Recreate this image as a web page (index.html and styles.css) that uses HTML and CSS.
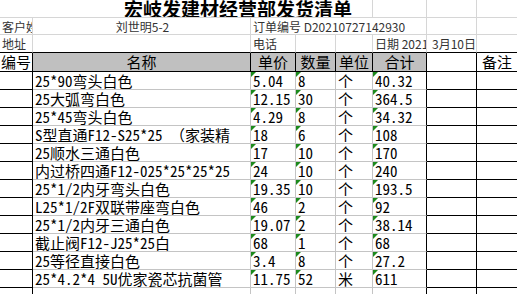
FILE: index.html
```html
<!DOCTYPE html>
<html>
<head>
    <title>宏岐发建材经营部发货清单</title>
    <meta charset="UTF-8">
    <link rel="stylesheet" href="styles.css">
</head>
<body>
    <div class="sheet">
        <!-- row 1: title -->
        <div class="c title">宏岐发建材经营部发货清单</div>
        <div class="c"></div>
        <div class="c"></div>
        <div class="c"></div>

        <!-- row 2 -->
        <div class="c info">客户姓名</div>
        <div class="c info mid">刘世明5-2</div>
        <div class="c info wide">订单编号 D20210727142930</div>
        <div class="c"></div>
        <div class="c"></div>

        <!-- row 3 -->
        <div class="c info last">地址</div>
        <div class="c last"></div>
        <div class="c info last">电话</div>
        <div class="c last"></div>
        <div class="c last"></div>
        <div class="c info last">日期 2021</div>
        <div class="c info last date">3月10日</div>
        <div class="c last"></div>

        <!-- header -->
        <div class="c head left">编号</div>
        <div class="c head fill">名称</div>
        <div class="c head fill">单价</div>
        <div class="c head fill">数量</div>
        <div class="c head fill">单位</div>
        <div class="c head fill">合计</div>
        <div class="c head"></div>
        <div class="c head">备注</div>
    </div>

    <script>
        var rows = [
            ['25*90弯头白色', '5.04', '8', '个', '40.32'],
            ['25大弧弯白色', '12.15', '30', '个', '364.5'],
            ['25*45弯头白色', '4.29', '8', '个', '34.32'],
            ['S型直通F12-S25*25 （家装精', '18', '6', '个', '108'],
            ['25顺水三通白色', '17', '10', '个', '170'],
            ['内过桥四通F12-025*25*25*25', '24', '10', '个', '240'],
            ['25*1/2内牙弯头白色', '19.35', '10', '个', '193.5'],
            ['L25*1/2F双联带座弯白色', '46', '2', '个', '92'],
            ['25*1/2内牙三通白色', '19.07', '2', '个', '38.14'],
            ['截止阀F12-J25*25白', '68', '1', '个', '68'],
            ['25等径直接白色', '3.4', '8', '个', '27.2'],
            ['25*4.2*4 5U优家瓷芯抗菌管', '11.75', '52', '米', '611'],
            null
        ];

        var sheet = document.querySelector('.sheet');

        function cell(cls, text) {
            var d = document.createElement('div');
            d.className = 'c ' + cls;
            d.textContent = text || '';
            sheet.appendChild(d);
        }

        rows.forEach(function(r) {
            r = r || ['', '', '', '', ''];
            var mark = r[1] ? ' mark' : '';
            cell('row edge bot', '');
            cell('row', r[0]);
            cell('row' + mark, r[1]);
            cell('row' + mark, r[2]);
            cell('row', r[3]);
            cell('row edge' + mark, r[4]);
            cell('row edge bot', '');
            cell('row edge bot', '');
        });
    </script>
</body>
</html>
```

FILE: styles.css
```css
body {
    margin: 0;
    background: #fff;
    font-family: "Noto Sans CJK SC", sans-serif;
    color: #000;
}
.sheet {
    display: grid;
    grid-template-columns: 33px 218px 45px 40px 37px 54px 50px 41px;
    grid-template-rows: 18px 17px 18px 19px repeat(13, 18px);
    width: 518px;
}
.c {
    box-sizing: border-box;
    border-right: 1px solid #d6d6d6;
    border-bottom: 1px solid #d6d6d6;
    overflow: hidden;
    white-space: nowrap;
    position: relative;
}
.title {
    grid-column: span 5;
    font-size: 19px;
    font-weight: bold;
    line-height: 17px;
    padding-left: 124px;
}
.info { font-size: 12px; line-height: 17px; color: #333; padding-left: 2px; }
.mid { text-align: center; }
.wide { grid-column: span 4; }
.date { padding-left: 5px; }
.last { border-bottom-color: #000; }

.head {
    font-size: 15px;
    line-height: 18px;
    text-align: center;
    border-right-color: #000;
    border-bottom-color: #000;
}
.head.left { text-align: left; padding-left: 1px; }
.head.fill { background: #c0c0c0; }

.row {
    font-family: "Noto Sans Mono CJK SC", "Noto Sans CJK SC", monospace;
    font-size: 15px;
    line-height: 17px;
    padding-left: 2px;
    border-right-color: #c4c4c4;
    border-bottom-color: #c4c4c4;
}
.row.edge { border-right-color: #000; }
.row.bot { border-bottom-color: #000; }
.mark::before {
    content: "";
    position: absolute;
    left: 0;
    top: 0;
    border-top: 5px solid #1c8a1c;
    border-right: 5px solid transparent;
}
```
